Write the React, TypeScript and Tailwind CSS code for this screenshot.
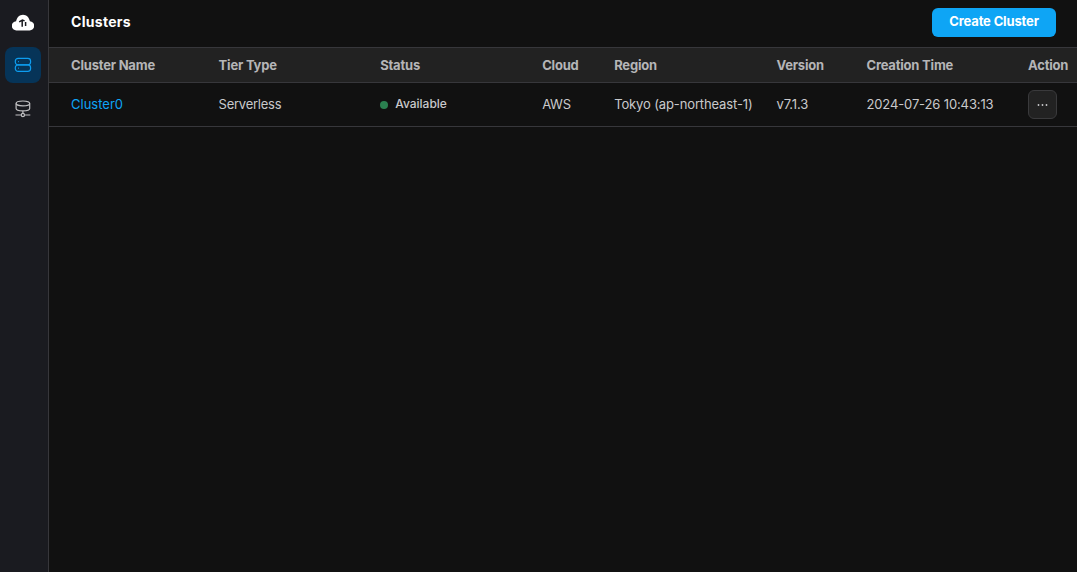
import React from 'react';

const columns =
  'grid grid-cols-[147.6px_161.6px_162px_72px_162.3px_90px_161.5px_1fr] items-center pl-[22px] whitespace-nowrap border-b border-[#37373b]';

const headings = ['Cluster Name', 'Tier Type', 'Status', 'Cloud', 'Region', 'Version', 'Creation Time', 'Action'];

function CloudLogo() {
  return (
    <svg width="22" height="17" viewBox="0 0 22 17">
      <path
        d="M4.6 16.4A4.5 4.5 0 0 1 4.1 7.3C4.8 3.6 7.5 .8 11 .8S17.2 3.6 17.9 7.3A4.5 4.5 0 0 1 17.4 16.4Z"
        fill="#fff"
      />
      <path d="M7.2 7.9 10.4 6 12.6 6.9M10.2 6.4V12.8M13.6 8V12" fill="none" stroke="#1a1b20" strokeWidth="1.5" />
    </svg>
  );
}

function ClustersIcon() {
  return (
    <svg width="18" height="16" viewBox="0 0 18 16" fill="none" stroke="#0d9df0" strokeWidth="1.2">
      <rect x="1.3" y="1.4" width="15.3" height="6.5" rx="2.8" />
      <rect x="1.3" y="7.9" width="15.3" height="6.5" rx="2.8" />
      <path d="M4.5 4.1V5.2M4.5 10.6V11.7" strokeWidth="0.9" />
    </svg>
  );
}

function DatabaseIcon() {
  return (
    <svg width="18" height="18" viewBox="0 0 18 18" fill="none" stroke="#c0c0c2" strokeWidth="1.2">
      <ellipse cx="8.9" cy="3.4" rx="6.8" ry="2.4" />
      <path d="M2.1 3.4V8.4C2.1 10 5 10.8 8.9 10.8S15.7 10 15.7 8.4V3.4M8.9 10.8V13.5M1.5 15H7.3M10.5 15H16.3" />
      <circle cx="8.9" cy="15" r="1.6" />
    </svg>
  );
}

export default function App() {
  return (
    <div className="flex h-screen w-full overflow-hidden bg-[#111111] font-['Inter',sans-serif] text-[13px] leading-5 text-[#c9c9cc]">
      <aside className="flex w-[49px] shrink-0 flex-col items-center border-r border-[#37373b] bg-[#1a1b20] pr-[2px]">
        <div className="flex h-[47px] items-center pb-[3px]">
          <CloudLogo />
        </div>
        <button className="flex size-9 items-center justify-center rounded-lg bg-[#063458]" aria-label="Clusters">
          <ClustersIcon />
        </button>
        <button className="mt-2 flex size-9 items-center justify-center" aria-label="Databases">
          <DatabaseIcon />
        </button>
      </aside>
      <main className="min-w-0 flex-1">
        <header className="flex h-12 items-center justify-between border-b border-[#37373b] pr-[21px] pb-[3px] pl-[22px]">
          <h1 className="text-[14px] font-bold tracking-[0.3px] text-white">Clusters</h1>
          <button className="h-[29px] w-[124px] rounded-md bg-[#0ea5f5] pb-0.5 text-[13px] font-bold tracking-[-0.15px] text-white">
            Create Cluster
          </button>
        </header>
        <div className={`${columns} h-[35px] bg-[#222222] font-bold tracking-[-0.2px] text-[#b5b5b7]`}>
          {headings.map((heading) => (
            <span key={heading}>{heading}</span>
          ))}
        </div>
        <div className={`${columns} h-11 tracking-[-0.13px]`}>
          <a className="pb-px tracking-normal text-[#0ea5f5]">Cluster0</a>
          <span className="pb-px tracking-[-0.25px]">Serverless</span>
          <span className="flex items-center text-[12px] font-medium tracking-normal">
            <i className="mr-[7px] size-2 rounded-full bg-[#2b8050]" />
            <span className="pb-px">Available</span>
          </span>
          <span className="pb-px tracking-[-0.3px]">AWS</span>
          <span className="pb-px">Tokyo (ap-northeast-1)</span>
          <span className="pb-px">v7.1.3</span>
          <span className="pb-px">2024-07-26 10:43:13</span>
          <button
            className="flex size-[29px] items-center justify-center rounded-md border border-[#3a3a3c] bg-[#222222]"
            aria-label="Actions"
          >
            <svg width="12" height="4" viewBox="0 0 12 4" fill="#c9c9cc">
              <circle cx="2.5" cy="2" r="0.9" />
              <circle cx="6.5" cy="2" r="0.9" />
              <circle cx="10.5" cy="2" r="0.9" />
            </svg>
          </button>
        </div>
      </main>
    </div>
  );
}
